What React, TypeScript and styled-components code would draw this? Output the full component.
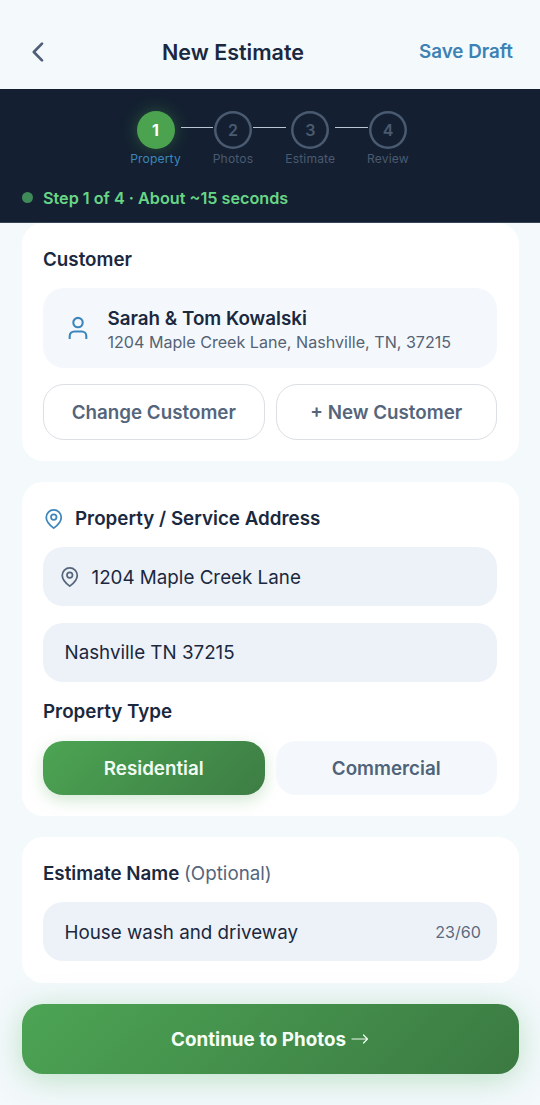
import React from "react";
import styled, { createGlobalStyle, css } from "styled-components";

const GlobalStyle = createGlobalStyle`
  *, *::before, *::after { box-sizing: border-box; }
  html, body { margin: 0; background: #f4f9fd; }
  body { font-family: Inter, "Liberation Sans", sans-serif; color: #1a2840; }
  button { font-family: inherit; border: 0; padding: 0; margin: 0; background: none; }
`;

const Screen = styled.div`
  width: 540px;
  height: 1105px;
  overflow: hidden;
  display: flex;
  flex-direction: column;
  background: #f4f9fc;
`;

const Header = styled.header`
  flex: none;
  height: 89px;
  padding: 14px 27px 0 29px;
  display: flex;
  justify-content: space-between;
  align-items: center;
`;

const BackButton = styled.button`
  width: 18px;
  height: 22px;
  display: flex;
  align-items: center;
  justify-content: center;
`;

const Title = styled.h1`
  margin: 0;
  font-size: 21.5px;
  line-height: 28px;
  font-weight: 600;
  white-space: nowrap;
`;

const SaveButton = styled.button`
  color: #3d82b4;
  font-size: 18.8px;
  line-height: 26px;
  font-weight: 600;
  white-space: nowrap;
`;

const Progress = styled.section`
  flex: none;
  height: 134px;
  padding-top: 21.5px;
  background: #142031;
  border-bottom: 1px solid #34455a;
`;

const Steps = styled.ol`
  list-style: none;
  margin: 0;
  padding: 0 1px 0 0;
  height: 56px;
  display: flex;
  justify-content: center;
`;

const Step = styled.li<{ $width: number }>`
  width: ${(p) => p.$width}px;
  display: flex;
  flex-direction: column;
  align-items: center;
`;

const StepLine = styled.li`
  width: 32.5px;
  height: 1.5px;
  margin-top: 16.2px;
  background: #b9c5d3;
`;

const StepCircle = styled.span<{ $active?: boolean }>`
  flex: none;
  width: 38px;
  height: 38px;
  border-radius: 50%;
  display: flex;
  align-items: center;
  justify-content: center;
  font-size: 16px;
  font-weight: 600;
  ${(p) =>
    p.$active
      ? css`
          background: #4ba34f;
          color: #fff;
          font-weight: 700;
          box-shadow: 0 0 16px rgba(76, 163, 80, 0.4);
        `
      : css`
          box-shadow: inset 0 0 0 2.5px #4a5a70;
          color: #4a5a70;
        `}
`;

const StepLabel = styled.span<{ $active?: boolean }>`
  margin-top: 2px;
  font-size: 12.1px;
  line-height: 16px;
  font-weight: 400;
  letter-spacing: 0.15px;
  white-space: nowrap;
  color: ${(p) => (p.$active ? "#3d86bb" : "#4a5a70")};
`;

const Status = styled.p`
  margin: 0;
  padding: 19px 21.5px 0;
  display: flex;
  align-items: center;
  gap: 10.5px;
  font-size: 16.2px;
  line-height: 24px;
  font-weight: 600;
  color: #68d586;
`;

const StatusDot = styled.i`
  width: 11px;
  height: 11px;
  border-radius: 50%;
  background: #3f8a59;
`;

const Content = styled.main`
  flex: none;
  padding: 0 21.5px;
  display: flex;
  flex-direction: column;
  gap: 21px;
`;

const Card = styled.section<{ $height: number }>`
  height: ${(p) => p.$height}px;
  padding: 22.5px 21.5px 0;
  border-radius: 21px;
  background: #fff;
`;

const SectionTitle = styled.h2<{ $top?: number }>`
  margin: ${(p) => p.$top ?? 0}px 0 0;
  height: 28px;
  display: flex;
  align-items: center;
  font-size: 18.8px;
  line-height: 28px;
  font-weight: 600;
  white-space: pre;
`;

const Optional = styled.span`
  font-weight: 400;
  color: #54657c;
`;

const TitleIcon = styled.span`
  width: 21.5px;
  margin-right: 10.5px;
  display: flex;
`;

const Customer = styled.div`
  margin-top: 14.5px;
  height: 80px;
  padding: 0 24px 0 23.5px;
  border-radius: 21px;
  background: #f4f8fc;
  display: flex;
  align-items: center;
  gap: 19px;
`;

const CustomerName = styled.div`
  padding-top: 2px;
  font-size: 18.8px;
  line-height: 25px;
  font-weight: 600;
`;

const CustomerAddress = styled.div`
  font-size: 16.1px;
  line-height: 22px;
  color: #566375;
  white-space: nowrap;
`;

const ButtonPair = styled.div<{ $top: number }>`
  margin-top: ${(p) => p.$top}px;
  display: grid;
  grid-template-columns: 1fr 1fr;
  gap: 11px;
`;

const OutlineButton = styled.button`
  height: 56.5px;
  padding-top: 1px;
  border: 1.4px solid #dcdfe3;
  border-radius: 21px;
  font-size: 18.8px;
  font-weight: 600;
  color: #54657c;
`;

const Field = styled.div<{ $top: number; $left?: number }>`
  margin-top: ${(p) => p.$top}px;
  height: 59px;
  padding: 1px 16px 0 ${(p) => p.$left ?? 21.5}px;
  border-radius: 20px;
  background: #edf2f8;
  display: flex;
  align-items: center;
  font-size: 18.8px;
  white-space: nowrap;
`;

const FieldIcon = styled.span`
  display: flex;
  margin-right: 11px;
`;

const Counter = styled.span`
  margin-left: auto;
  font-size: 16.1px;
  color: #5b6a7e;
`;

const TypeButton = styled.button<{ $selected?: boolean }>`
  height: 54px;
  padding-top: 1px;
  border-radius: 20px;
  font-size: 18.8px;
  font-weight: 600;
  ${(p) =>
    p.$selected
      ? css`
          background: linear-gradient(135deg, #4ca453 0%, #3d7d44 100%);
          color: #f2fbf2;
          box-shadow: 0 5px 16px rgba(76, 163, 80, 0.26);
        `
      : css`
          background: #f4f8fc;
          color: #4f6379;
        `}
`;

const Footer = styled.footer`
  flex: none;
  padding: 21px 21.5px 0;
`;

const ContinueButton = styled.button`
  width: 100%;
  height: 70px;
  border-radius: 21px;
  display: flex;
  align-items: center;
  justify-content: center;
  gap: 5px;
  font-size: 18.8px;
  font-weight: 700;
  color: #f6fff6;
  background: linear-gradient(135deg, #4ca454 0%, #3b7a42 100%);
  box-shadow: 0 5px 32px rgba(76, 175, 90, 0.34);
`;

const Pin = ({ color }: { color: string }) => (
  <svg width="21.5" height="20" viewBox="-0.75 0 21.5 20" fill="none" stroke={color} strokeWidth="1.75" strokeLinejoin="round">
    <path d="M17.5 8.4c0 4.5-4.1 8.2-7.5 10.7C6.6 16.6 2.5 12.9 2.5 8.4a7.5 7.5 0 0 1 15 0Z" />
    <circle cx="10" cy="8.1" r="2.75" />
  </svg>
);

const Person = () => (
  <svg width="22" height="24" viewBox="0 0 22 24" fill="none" stroke="#3d86bb" strokeWidth="2.1">
    <circle cx="11" cy="6.6" r="4.7" />
    <path d="M2.7 23.1V20a4.5 4.5 0 0 1 4.5-4.5h7.6a4.5 4.5 0 0 1 4.5 4.5v3.1" />
  </svg>
);

const steps = [
  { name: "Property", width: 50 },
  { name: "Photos", width: 40 },
  { name: "Estimate", width: 49.5 },
  { name: "Review", width: 41 },
];

export default function App() {
  return (
    <>
      <GlobalStyle />
      <Screen>
        <Header>
          <BackButton aria-label="Back">
            <svg width="14" height="22" viewBox="0 0 14 22" fill="none" stroke="#4f5f78" strokeWidth="2.7" strokeLinecap="round" strokeLinejoin="round">
              <path d="M11 2.6 2.8 11l8.2 8.4" />
            </svg>
          </BackButton>
          <Title>New Estimate</Title>
          <SaveButton>Save Draft</SaveButton>
        </Header>
        <Progress>
          <Steps>
            {steps.map((s, i) => (
              <React.Fragment key={s.name}>
                {i > 0 && <StepLine />}
                <Step $width={s.width}>
                  <StepCircle $active={i === 0}>{i + 1}</StepCircle>
                  <StepLabel $active={i === 0}>{s.name}</StepLabel>
                </Step>
              </React.Fragment>
            ))}
          </Steps>
          <Status>
            <StatusDot />
            Step 1 of 4 · About ~15 seconds
          </Status>
        </Progress>
        <Content>
          <Card $height={238}>
            <SectionTitle>Customer</SectionTitle>
            <Customer>
              <Person />
              <div>
                <CustomerName>Sarah &amp; Tom Kowalski</CustomerName>
                <CustomerAddress>1204 Maple Creek Lane, Nashville, TN, 37215</CustomerAddress>
              </div>
            </Customer>
            <ButtonPair $top={15.5}>
              <OutlineButton>Change Customer</OutlineButton>
              <OutlineButton>+ New Customer</OutlineButton>
            </ButtonPair>
          </Card>
          <Card $height={334}>
            <SectionTitle>
              <TitleIcon>
                <Pin color="#3d86bb" />
              </TitleIcon>
              Property / Service Address
            </SectionTitle>
            <Field $top={14.5} $left={16}>
              <FieldIcon>
                <Pin color="#54657c" />
              </FieldIcon>
              1204 Maple Creek Lane
            </Field>
            <Field $top={16.5}>Nashville TN 37215</Field>
            <SectionTitle $top={16.5}>Property Type</SectionTitle>
            <ButtonPair $top={14.5}>
              <TypeButton $selected>Residential</TypeButton>
              <TypeButton>Commercial</TypeButton>
            </ButtonPair>
          </Card>
          <Card $height={146}>
            <SectionTitle>
              Estimate Name <Optional>(Optional)</Optional>
            </SectionTitle>
            <Field $top={14.5}>
              House wash and driveway
              <Counter>23/60</Counter>
            </Field>
          </Card>
        </Content>
        <Footer>
          <ContinueButton>
            Continue to Photos
            <svg width="18" height="12" viewBox="0 0 18 12" fill="none" stroke="#eefbee" strokeWidth="1.2" strokeLinecap="round" strokeLinejoin="round">
              <path d="M1 6h15.5M12.5 2l4 4-4 4" />
            </svg>
          </ContinueButton>
        </Footer>
      </Screen>
    </>
  );
}
